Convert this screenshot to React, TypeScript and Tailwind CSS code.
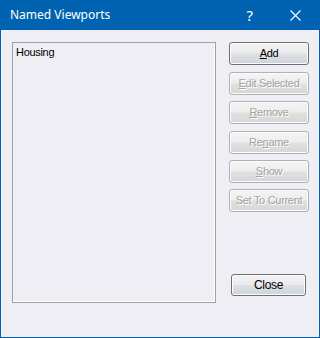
import React from "react";

const buttons = [
  { label: "Add", key: "A", rest: "dd", enabled: true, mt: "mt-0" },
  { label: "Edit Selected", key: "E", rest: "dit Selected", enabled: false, mt: "mt-[7px]" },
  { label: "Remove", key: "R", rest: "emove", enabled: false, mt: "mt-[6px]" },
  { label: "Rename", pre: "Re", key: "n", rest: "ame", enabled: false, mt: "mt-[7px]" },
  { label: "Show", key: "S", rest: "how", enabled: false, mt: "mt-[6px]" },
  { label: "Set To Current", rest: "Set To Current", enabled: false, mt: "mt-[6px]" },
];

function WinButton({
  children,
  enabled,
  className,
}: {
  children: React.ReactNode;
  enabled: boolean;
  className?: string;
}) {
  return (
    <div
      className={
        (enabled
          ? "border-[#707070] text-black bg-[linear-gradient(#f2f2f2_0%,#ebebeb_48%,#dde1e6_52%,#cfd4da_100%)]"
          : "border-[#adb2b5] text-[#a3a3a3] [text-shadow:1px_1px_0_#ffffff] bg-[linear-gradient(#f4f4f4_0%,#ededed_48%,#e0e0e0_52%,#d6d6d6_100%)]") +
        " flex items-center justify-center rounded-[3px] border text-[11px] leading-none tracking-[-0.3px] shadow-[inset_0_0_0_1px_#fcfcfc] " +
        (className ?? "")
      }
    >
      {children}
    </div>
  );
}

export default function App() {
  return (
    <div
      className="flex h-[338px] w-[320px] flex-col border-x border-b border-[#0063b1] bg-[#efeef4]"
      style={{ fontFamily: '"Liberation Sans", Arial, sans-serif' }}
    >
      <div className="-mx-px flex h-[30px] shrink-0 items-center bg-[#0063b1] text-white">
        <span className="ml-[10px] flex-1 text-[12px] font-['Noto_Sans',sans-serif]">
          Named Viewports
        </span>
        <span className="mr-[37px] text-[15px] font-['Noto_Sans',sans-serif]">?</span>
        <svg width="11" height="11" viewBox="0 0 11 11" className="mr-[19px]">
          <path d="M0.5 0.5L10.5 10.5M10.5 0.5L0.5 10.5" stroke="#fff" strokeWidth="1.1" />
        </svg>
      </div>

      <div className="flex pt-[12px]">
        <div className="ml-[11px] h-[261px] w-[204px] border border-[#a0a0a0] shadow-[inset_-1px_-1px_0_#ffffff] bg-[#efeef4] px-[3px] pt-[3px] text-[11px] leading-[13px] tracking-[-0.3px] text-black">
          Housing
        </div>

        <div className="ml-[13px] flex flex-col">
          {buttons.map((b) => (
            <WinButton key={b.label} enabled={b.enabled} className={"h-[23px] w-[80px] " + b.mt}>
              <span>
                {b.pre}
                {b.key && <span className="underline underline-offset-[1px]">{b.key}</span>}
                {b.rest}
              </span>
            </WinButton>
          ))}
          <WinButton enabled className="ml-[2px] mt-[62px] h-[22px] w-[75px] text-[12px]">
            Close
          </WinButton>
        </div>
      </div>
    </div>
  );
}
